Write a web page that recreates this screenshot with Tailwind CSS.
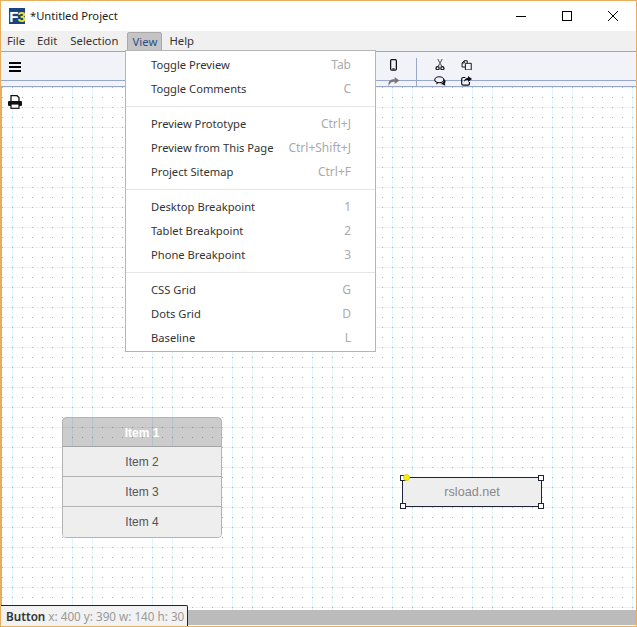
<!doctype html>
<html lang="en">
  <head>
    <meta charset="UTF-8" />
    <title>*Untitled Project</title>
    <script src="https://cdn.jsdelivr.net/npm/@tailwindcss/browser@4"></script>
  </head>
  <body class="bg-white">
    <div class="relative w-[637px] h-[627px] border border-[#e6ae5e] bg-white flex flex-col overflow-hidden font-['Noto_Sans',sans-serif] text-[#222]">
      <!-- title bar -->
      <div class="h-[30px] flex items-center shrink-0">
        <div class="ml-[8px] w-[16px] h-[16px] bg-[#1a4384] flex items-center justify-center font-['Liberation_Sans',sans-serif] font-bold text-[15px] leading-none tracking-[-1px]">
          <span class="text-white">F</span><span class="text-[#f4e22c]">3</span>
        </div>
        <span class="ml-[5px] text-[11.2px]">*Untitled Project</span>
        <div class="ml-auto flex items-center h-full">
          <div class="w-[46px] flex justify-center"><div class="w-[10px] h-px bg-black"></div></div>
          <div class="w-[46px] flex justify-center"><div class="w-[10px] h-[10px] border border-black"></div></div>
          <div class="w-[46px] flex justify-center">
            <svg width="10" height="10" viewBox="0 0 10 10" fill="none" stroke="black" stroke-width="1"><path d="M0 0L10 10M10 0L0 10" /></svg>
          </div>
        </div>
      </div>
      <!-- menu bar -->
      <div class="h-[20px] bg-[#f0f0f0] flex items-center text-[11.3px] text-[#333] shrink-0">
        <span class="pl-[6px]">File</span>
        <span class="pl-[12px]">Edit</span>
        <span class="pl-[13px]">Selection</span>
        <span class="ml-[9px] w-[35px] text-center h-[19px] mt-px leading-[17px] bg-[#c4c4c4] border border-[#a9a9a9] rounded-[2px] text-[#2a4f88]">View</span>
        <span class="pl-[7px]">Help</span>
      </div>
      <!-- toolbar -->
      <div class="relative h-[36px] bg-[#f1f3f8] border-y border-[#98a8cb] flex shrink-0">
        <div class="absolute inset-x-0 top-[28px] h-px bg-[#98a8cb]"></div>
        <div class="ml-[8px] mt-[10px] w-[12px] flex flex-col gap-[2px]">
          <div class="h-[2px] bg-black"></div>
          <div class="h-[2px] bg-black"></div>
          <div class="h-[2px] bg-black"></div>
        </div>
        <div class="relative ml-auto mr-[162px] flex">
          <div class="w-[16px] flex flex-col items-center pt-[7px] gap-[6px]">
            <svg class="ml-[2px]" width="9" height="15" viewBox="0 0 9 15"><rect x="0.8" y="0.8" width="7.4" height="13.4" rx="1.5" fill="none" stroke="#111" stroke-width="1.6" /><rect x="3" y="12" width="3" height="1.500" fill="#111" /></svg>
            <svg class="ml-[2px]" width="15" height="12" viewBox="0 0 15 12"><path d="M9 0L15 4.500L9 9V6C5 6 2.500 7 1.500 12C0 7 2 3 9 3Z" fill="#777" /></svg>
          </div>
          <div class="w-px h-[34px] ml-[16px] mt-[6px] bg-[#98a8cb]"></div>
          <div class="w-[16px] ml-[15px] flex flex-col items-center pt-[7px] gap-[6px]">
            <svg width="12" height="15" viewBox="0 0 12 15" fill="none"><path d="M3 0L8.500 10M9 0L3.500 10" stroke="#666" stroke-width="1.500" /><circle cx="2.800" cy="12.200" r="2.100" stroke="#111" stroke-width="1.600" /><circle cx="9.200" cy="12.200" r="2.100" stroke="#111" stroke-width="1.600" /></svg>
            <svg width="16" height="13" viewBox="0 0 16 13"><ellipse cx="7" cy="5" rx="6" ry="4" fill="#f1f3f8" stroke="#111" stroke-width="1.500" /><path d="M14 4C16 6 15.500 9 14.500 10L15 13L11 11L8 10.500C11 10 13.500 8 14 4Z" fill="#111" /><path d="M3.500 8.500L3 11.500L6 9Z" fill="#111" /></svg>
          </div>
          <div class="w-[16px] ml-[10px] flex flex-col items-center pt-[8px] gap-[6px]">
            <svg width="15" height="14" viewBox="0 0 14 14" fill="none" stroke="#111" stroke-width="1.300"><path d="M1 9.500V4L4 1H8V4" /><path d="M4 1V4H1" /><path d="M5.500 4.500H10L13.400 4.500V13.400H5.500V9" /><path d="M1 9.500H5.500V4.500" /></svg>
            <svg width="15" height="13" viewBox="0 0 15 13"><path d="M6 2H3C1.800 2 1 2.800 1 4V10.500C1 11.500 1.800 12.300 3 12.300H9.500C10.700 12.300 11.500 11.500 11.500 10.500V8" fill="none" stroke="#111" stroke-width="1.600" /><path d="M9.500 0L15 4L9.500 8V5.500C7 5.500 5 6 4 8.500C4 5 6 3 9.500 2.500Z" fill="#111" /></svg>
          </div>
        </div>
      </div>
      <!-- canvas -->
      <div class="relative flex-1 border-l border-[#a9b6d3] bg-white bg-[radial-gradient(circle_at_1.5px_0.5px,#b4b4b4_0.6px,transparent_0.7px),linear-gradient(to_right,#e2f6fb_1px,transparent_1px),linear-gradient(to_right,#e2f6fb_1px,transparent_1px),linear-gradient(to_bottom,#fdecee_1px,transparent_1px)] bg-[size:10px_10px,80px_100%,80px_100%,100%_20px] bg-[position:-1px_0px,10px_0px,70px_0px,0px_0px]">
        <svg class="absolute left-[6px] top-[8px]" width="14" height="14" viewBox="0 0 14 14"><path d="M3 6V0.700H9L11 2.500V6" fill="white" stroke="#111" stroke-width="1.300" /><rect x="0" y="6" width="14" height="5" rx="1" fill="#111" /><rect x="3" y="9" width="8" height="4.300" fill="white" stroke="#111" stroke-width="1.200" /></svg>

        <!-- list group -->
        <div class="absolute left-[60px] top-[330px] w-[160px] flex flex-col rounded-[4px] border border-[#b3b3b3] font-['Liberation_Sans',sans-serif] text-[12px] text-center text-[#555] overflow-hidden">
          <div class="h-[29px] leading-[30px] bg-black/20 font-bold text-white border-b border-[#a3a3a3]">Item 1</div>
          <div class="h-[30px] leading-[30px] bg-[#eeeeee] border-b border-[#b3b3b3]">Item 2</div>
          <div class="h-[30px] leading-[30px] bg-[#eeeeee] border-b border-[#b3b3b3]">Item 3</div>
          <div class="h-[30px] leading-[30px] bg-[#eeeeee]">Item 4</div>
        </div>

        <!-- selected button -->
        <div class="absolute left-[400px] top-[390px] w-[140px] h-[30px] border border-[#1d2438] bg-[#eeeeee] flex items-center justify-center font-['Liberation_Sans',sans-serif] text-[12.6px] text-[#888]">
          rsload.net
          <div class="absolute -left-[3px] -top-[3px] w-[6px] h-[6px] bg-white border border-[#1d2438]"></div>
          <div class="absolute -right-[3px] -top-[3px] w-[6px] h-[6px] bg-white border border-[#1d2438]"></div>
          <div class="absolute -left-[3px] -bottom-[3px] w-[6px] h-[6px] bg-white border border-[#1d2438]"></div>
          <div class="absolute -right-[3px] -bottom-[3px] w-[6px] h-[6px] bg-white border border-[#1d2438]"></div>
          <div class="absolute left-[0px] -top-[4px] w-[7px] h-[7px] rounded-full bg-[#f8f000] border border-[#d8d020]"></div>
        </div>
      </div>
      <!-- bottom scrollbar -->
      <div class="h-[15px] mb-px bg-[#bbbbbb] shrink-0"></div>

      <!-- view menu -->
      <div class="absolute left-[124px] top-[49px] w-[251px] h-[302px] bg-white border border-[#b5b5b5] py-[2px] text-[11.2px] text-[#333]">
        <div class="h-[24px] flex items-center justify-between pl-[25px] pr-[24px]"><span>Toggle Preview</span><span class="text-[12px] text-[#aaaaaa]">Tab</span></div>
        <div class="h-[24px] flex items-center justify-between pl-[25px] pr-[24px]"><span>Toggle Comments</span><span class="text-[12px] text-[#aaaaaa]">C</span></div>
        <div class="h-px my-[5px] bg-[#e4e4e4]"></div>
        <div class="h-[24px] flex items-center justify-between pl-[25px] pr-[24px]"><span>Preview Prototype</span><span class="text-[12px] text-[#aaaaaa]">Ctrl+J</span></div>
        <div class="h-[24px] flex items-center justify-between pl-[25px] pr-[24px]"><span>Preview from This Page</span><span class="text-[12px] text-[#aaaaaa]">Ctrl+Shift+J</span></div>
        <div class="h-[24px] flex items-center justify-between pl-[25px] pr-[24px]"><span>Project Sitemap</span><span class="text-[12px] text-[#aaaaaa]">Ctrl+F</span></div>
        <div class="h-px my-[5px] bg-[#e4e4e4]"></div>
        <div class="h-[24px] flex items-center justify-between pl-[25px] pr-[24px]"><span>Desktop Breakpoint</span><span class="text-[12px] text-[#aaaaaa]">1</span></div>
        <div class="h-[24px] flex items-center justify-between pl-[25px] pr-[24px]"><span>Tablet Breakpoint</span><span class="text-[12px] text-[#aaaaaa]">2</span></div>
        <div class="h-[24px] flex items-center justify-between pl-[25px] pr-[24px]"><span>Phone Breakpoint</span><span class="text-[12px] text-[#aaaaaa]">3</span></div>
        <div class="h-px my-[5px] bg-[#e4e4e4]"></div>
        <div class="h-[24px] flex items-center justify-between pl-[25px] pr-[24px]"><span>CSS Grid</span><span class="text-[12px] text-[#aaaaaa]">G</span></div>
        <div class="h-[24px] flex items-center justify-between pl-[25px] pr-[24px]"><span>Dots Grid</span><span class="text-[12px] text-[#aaaaaa]">D</span></div>
        <div class="h-[24px] flex items-center justify-between pl-[25px] pr-[24px]"><span>Baseline</span><span class="text-[12px] text-[#aaaaaa]">L</span></div>
      </div>

      <!-- status tooltip -->
      <div class="absolute left-0 bottom-0 w-[187px] h-[21px] bg-[#f2f2f2] border-t border-r border-[#1d2438] rounded-tr-[2px] pl-[5px] leading-[20px] text-[11.7px] text-[#999] whitespace-nowrap"><span class="font-semibold text-[#333]">Button</span> x: 400 y: 390 w: 140 h: 30</div>
    </div>
  </body>
</html>
